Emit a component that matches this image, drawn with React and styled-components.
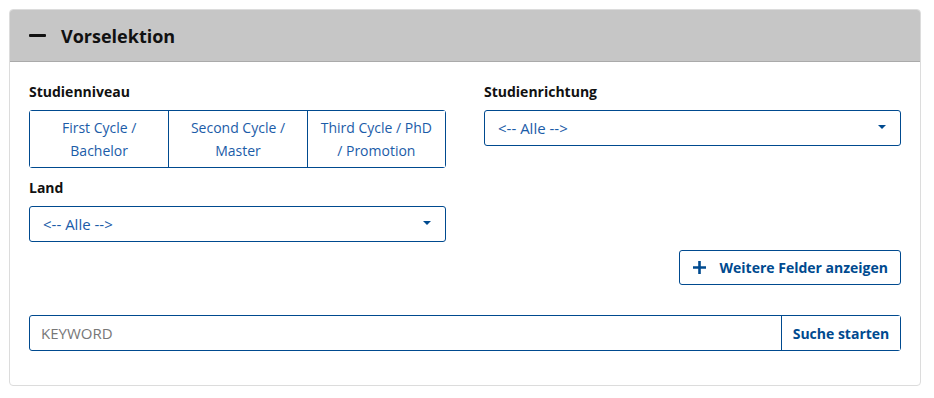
import React from "react";
import styled, { createGlobalStyle } from "styled-components";

const blue = "#004a8f";
const lightBlue = "#1b5ca8";

const GlobalStyle = createGlobalStyle`
  body {
    margin: 0;
    background: #fff;
    font-family: "Open Sans", "Noto Sans", sans-serif;
  }
`;

const Page = styled.div`
  padding: 9px 13px 12px 9px;
`;

const Card = styled.section`
  border: 1px solid #dcdcdc;
  border-radius: 4px;
  overflow: hidden;
`;

const Header = styled.div`
  display: flex;
  align-items: center;
  gap: 15px;
  height: 51px;
  padding: 0 19px;
  background: #c6c6c6;
  border-bottom: 1px solid #aaa;
  font-size: 18px;
  font-weight: 700;
  color: #111;
`;

const Minus = styled.span`
  width: 17px;
  height: 3px;
  background: #111;
  border-radius: 1px;
`;

const Body = styled.div`
  padding: 20px 19px 34px;
`;

const Grid = styled.div`
  display: grid;
  grid-template-columns: 1fr 1fr;
  column-gap: 38px;
`;

const Field = styled.div`
  display: flex;
  flex-direction: column;
  gap: 8px;
  margin-bottom: ${(p) => p.$mb || 0}px;
`;

const Label = styled.div`
  font-size: 14px;
  font-weight: 700;
  color: #111;
  line-height: 20px;
`;

const Segments = styled.div`
  display: grid;
  grid-template-columns: repeat(3, 1fr);
  border: 1px solid ${blue};
  border-radius: 3px;
`;

const Segment = styled.button`
  font: inherit;
  font-size: 14px;
  line-height: 23px;
  color: ${lightBlue};
  background: #fff;
  border: 0;
  border-left: ${(p) => (p.$first ? "0" : `1px solid ${blue}`)};
  padding: 5px 8px;
  height: 56px;
  text-align: center;
`;

const SelectBox = styled.div`
  display: flex;
  align-items: center;
  justify-content: space-between;
  height: 36px;
  box-sizing: border-box;
  padding: 0 14px 0 13px;
  border: 1px solid ${blue};
  border-radius: 3px;
  font-size: 15px;
  color: ${lightBlue};
`;

const Caret = styled.span`
  width: 0;
  height: 0;
  border-left: 4px solid transparent;
  border-right: 4px solid transparent;
  border-top: 4px solid ${blue};
  margin-top: -2px;
`;

const Actions = styled.div`
  display: flex;
  justify-content: flex-end;
  margin: 8px 0 30px;
`;

const MoreButton = styled.button`
  display: flex;
  align-items: center;
  gap: 14px;
  height: 35px;
  padding: 0 12px 0 13px;
  font: inherit;
  font-size: 14px;
  font-weight: 700;
  color: ${blue};
  background: #fff;
  border: 1px solid ${blue};
  border-radius: 3px;
`;

const SearchGroup = styled.div`
  display: flex;
  height: 36px;
  border: 1px solid ${blue};
  border-radius: 3px;
  box-sizing: border-box;
`;

const Keyword = styled.input`
  flex: 1;
  border: 0;
  outline: none;
  padding: 0 11px;
  font: inherit;
  font-size: 15px;
  color: #333;
  background: transparent;
  &::placeholder {
    color: #777;
  }
`;

const SearchButton = styled.button`
  width: 119px;
  border: 0;
  border-left: 1px solid ${blue};
  background: #fff;
  font: inherit;
  font-size: 14px;
  font-weight: 700;
  color: ${blue};
`;

function Select() {
  return (
    <SelectBox>
      <span>&lt;-- Alle --&gt;</span>
      <Caret />
    </SelectBox>
  );
}

export default function App() {
  return (
    <Page>
      <GlobalStyle />
      <Card>
        <Header>
          <Minus />
          Vorselektion
        </Header>
        <Body>
          <Grid>
            <div>
              <Field $mb={10}>
                <Label>Studienniveau</Label>
                <Segments>
                  <Segment $first>First Cycle /<br />Bachelor</Segment>
                  <Segment>Second Cycle /<br />Master</Segment>
                  <Segment>Third Cycle / PhD<br />/ Promotion</Segment>
                </Segments>
              </Field>
              <Field>
                <Label>Land</Label>
                <Select />
              </Field>
            </div>
            <div>
              <Field>
                <Label>Studienrichtung</Label>
                <Select />
              </Field>
            </div>
          </Grid>
          <Actions>
            <MoreButton>
              <svg width="13" height="13" viewBox="0 0 13 13">
                <path d="M6.5 0v13M0 6.5h13" stroke={blue} strokeWidth="2.6" />
              </svg>
              Weitere Felder anzeigen
            </MoreButton>
          </Actions>
          <SearchGroup>
            <Keyword placeholder="KEYWORD" />
            <SearchButton>Suche starten</SearchButton>
          </SearchGroup>
        </Body>
      </Card>
    </Page>
  );
}
